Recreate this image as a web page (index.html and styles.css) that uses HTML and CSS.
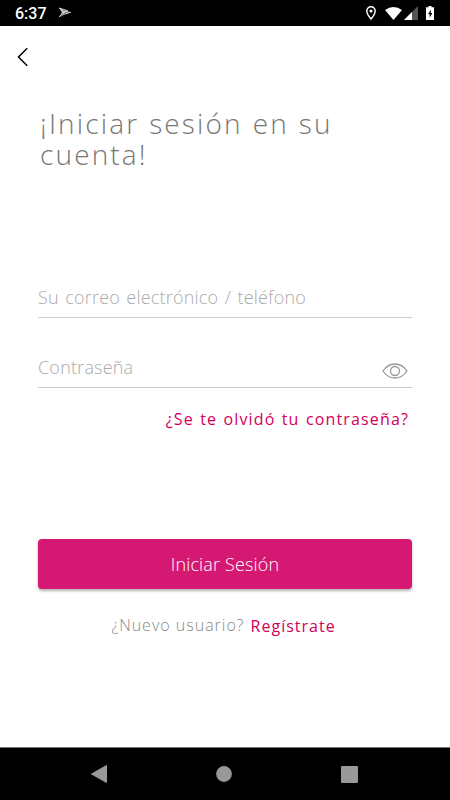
FILE: index.html
```html
<!DOCTYPE html>
<html lang="es">
<head>
    <meta charset="UTF-8">
    <title>Iniciar Sesión</title>
    <link rel="stylesheet" href="styles.css">
</head>
<body>
<div class="status">
    <span class="time">6:37</span>
    <svg class="notify" width="14" height="12" viewBox="0 0 14 12">
        <path d="M1 .8 13 5.2 1 10.2 3.6 5.5z" fill="#777"/>
        <path d="M1 .8 8 6.5 13 5.2M1 10.2 6 4.5 10 4M3 2.2l3 5.5M1.500 1.200 10 3.800" fill="none" stroke="#ddd" stroke-width=".9"/>
    </svg>
    <div class="status-icons">
        <svg width="10" height="14" viewBox="0 0 10 14">
            <path d="M5 .8C2.600.8.8 2.600.8 5c0 3 4.200 8 4.200 8s4.200-5 4.200-8C9.200 2.600 7.400.8 5 .8z" fill="none" stroke="#fff" stroke-width="1.400"/>
            <circle cx="5" cy="5" r="1.600" fill="#fff"/>
        </svg>
        <svg class="wifi" width="17" height="13" viewBox="0 0 17 13">
            <path d="M0 3Q8.500-3 17 3L8.500 13z" fill="#fff"/>
        </svg>
        <svg class="signal" width="14" height="14" viewBox="0 0 14 14">
            <path d="M14 0v14H0z" fill="#555"/>
            <path d="M8 6v8H0z" fill="#fff"/>
        </svg>
        <svg class="battery" width="8" height="14" viewBox="0 0 8 14">
            <path d="M2.500 0h3v1.300H8V14H0V1.300h2.500z" fill="#fff"/>
            <path d="M5 3.500 2 8.200h1.700v3.600L6.300 7H4.700z" fill="#000"/>
        </svg>
    </div>
</div>

<div class="page">
    <a class="back" href="#">
        <svg width="12" height="20" viewBox="0 0 12 20">
            <path d="M10.200 1.200 1.500 10l8.700 8.700" fill="none" stroke="#000" stroke-width="1.500"/>
        </svg>
    </a>
    <h1>¡Iniciar sesión en su cuenta!</h1>
    <form class="login">
        <div class="field"><span>Su correo electrónico / teléfono</span></div>
        <div class="field">
            <span class="pass">Contraseña</span>
            <svg class="eye" width="26" height="16" viewBox="0 0 26 16">
                <path d="M1 8C4 3.500 8 1 13 1s9 2.500 12 7c-3 4.500-7 7-12 7S4 12.500 1 8z"/>
                <circle cx="13" cy="8" r="4.500"/>
            </svg>
        </div>
        <a class="forgot" href="#">¿Se te olvidó tu contraseña?</a>
        <button class="submit" type="button"><span>Iniciar Sesión</span></button>
    </form>
    <p class="register"><span>¿Nuevo usuario?</span><a href="#">Regístrate</a></p>
</div>

<div class="nav">
    <svg width="16" height="18" viewBox="0 0 16 18"><path d="M15.500.5v17L.5 9z" fill="#999" stroke="#999" stroke-linejoin="round"/></svg>
    <svg width="16" height="16" viewBox="0 0 16 16"><circle cx="8" cy="8" r="7.900" fill="#999"/></svg>
    <svg width="17" height="17" viewBox="0 0 17 17"><rect width="17" height="17" rx="1.200" fill="#999"/></svg>
</div>
</body>
</html>
```
FILE: styles.css
```css
*{
    margin: 0;
    padding: 0;
    box-sizing: border-box;
}
body{
    width: 450px;
    height: 800px;
    display: flex;
    flex-direction: column;
    background: #fff;
    font-family: "Open Sans","Noto Sans",sans-serif;
    font-weight: 300;
}
a{
    text-decoration: none;
}
svg{
    display: block;
    flex: none;
}
.status{
    height: 26px;
    padding: 0 16px 0 15px;
    display: flex;
    align-items: center;
    background: #000;
    color: #fff;
}
.time{
    font: 500 16px/26px Roboto,sans-serif;
    padding-top: 2px;
}
.notify{
    margin-left: 11px;
}
.status-icons{
    margin-left: auto;
    display: flex;
    align-items: center;
}
.wifi{
    margin-left: 9px;
}
.signal{
    margin-left: 2px;
}
.battery{
    margin-left: 8px;
}
.page{
    flex: 1;
    padding: 21px 38px 0;
}
.back{
    display: block;
    width: 12px;
    margin-left: -21px;
}
h1{
    width: 310px;
    margin: 41px 0 0 2px;
    font-size: 28px;
    line-height: 31px;
    font-weight: 300;
    letter-spacing: 2.15px;
    word-spacing: .5px;
    color: #777;
}
.login{
    display: flex;
    flex-direction: column;
    margin-top: 78px;
}
.field{
    height: 70px;
    padding-bottom: 7px;
    border-bottom: 1px solid #ccc;
    display: flex;
    align-items: flex-end;
    justify-content: space-between;
    font-size: 18px;
    line-height: 26px;
    letter-spacing: .2px;
    word-spacing: 1.5px;
    white-space: nowrap;
    color: #aaa;
}
.eye{
    margin: 0 4px 1px 0;
    fill: none;
    stroke: #999;
    stroke-width: 1.3;
}
.forgot{
    align-self: flex-end;
    margin: 19px 3px 0 0;
    font-size: 16px;
    line-height: 24px;
    font-weight: 400;
    letter-spacing: 1.15px;
    word-spacing: 1px;
    white-space: nowrap;
    color: #d2005a;
}
.submit{
    height: 50px;
    margin-top: 108px;
    border: 0;
    border-radius: 4px;
    background: #d51872;
    box-shadow: 0 2px 3px rgba(0,0,0,.3);
    color: #fff;
    font: inherit;
    font-size: 18px;
    letter-spacing: .15px;
}
.register{
    display: flex;
    justify-content: center;
    gap: 6px;
    margin: 24px 3px 0 0;
    font-size: 16px;
    line-height: 24px;
    letter-spacing: 1px;
    white-space: nowrap;
    color: #888;
}
.register a{
    padding-top: 1px;
    font-weight: 400;
    color: #d2005a;
}
.nav{
    height: 53px;
    padding: 0 92px 0 91px;
    border-top: 1px solid #777;
    display: flex;
    align-items: center;
    justify-content: space-between;
    background: #000;
}
```
